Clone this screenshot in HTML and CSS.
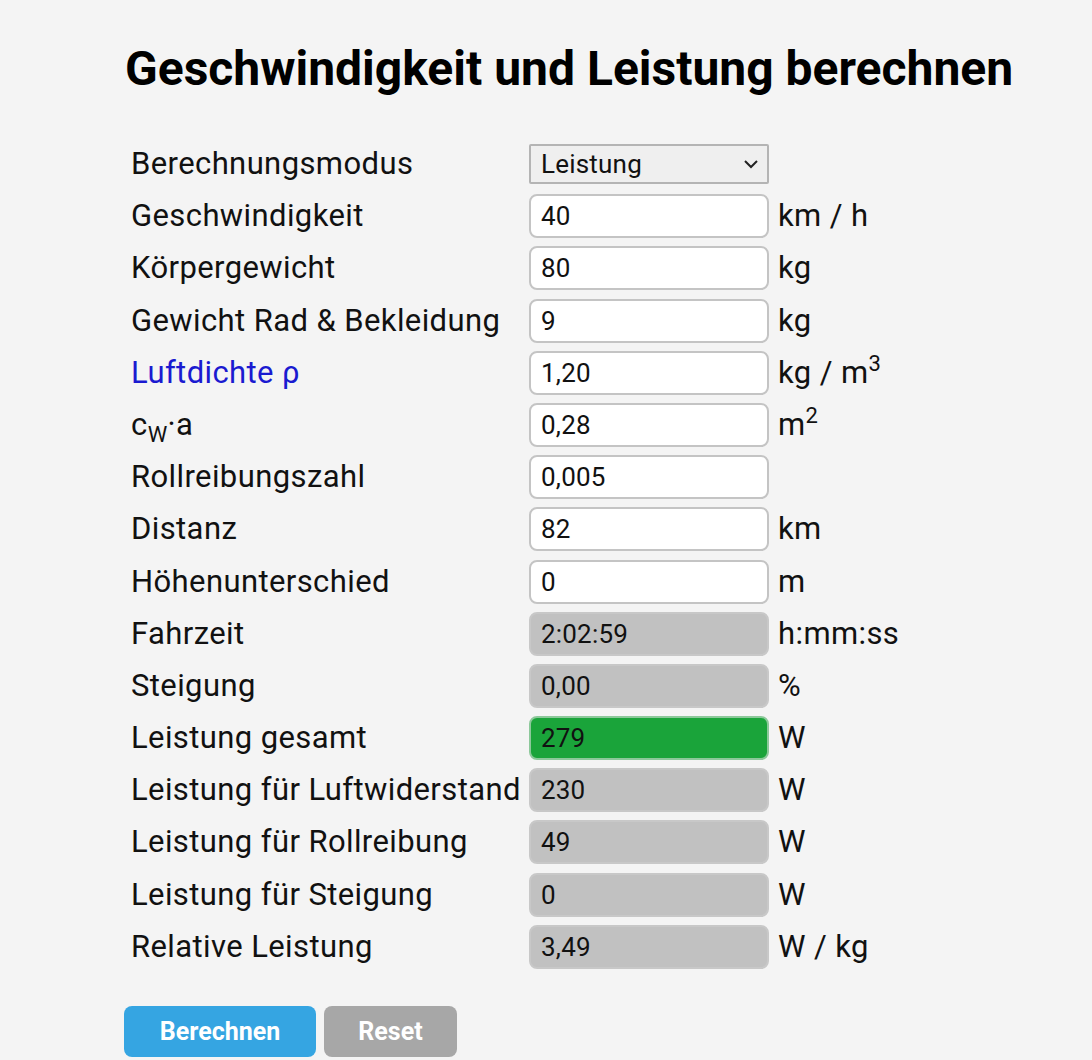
FILE: index.html
```html
<!DOCTYPE html>
<html lang="de">
<head>
<meta charset="utf-8">
<title>Geschwindigkeit und Leistung berechnen</title>
<link rel="stylesheet" href="styles.css">
</head>
<body>
<main class="page">
  <h1 class="title">Geschwindigkeit und Leistung berechnen</h1>
  <div class="form">
    <div class="label">Berechnungsmodus</div>
    <div class="field"><div class="select"><span>Leistung</span><svg class="chev" width="16" height="10" viewBox="0 0 16 10"><path d="M2 2 L8 8 L14 2" fill="none" stroke="#222" stroke-width="2"/></svg></div></div>
    <div class="unit"></div>

    <div class="label">Geschwindigkeit</div>
    <div class="field"><div class="input">40</div></div>
    <div class="unit">km / h</div>

    <div class="label">Körpergewicht</div>
    <div class="field"><div class="input">80</div></div>
    <div class="unit">kg</div>

    <div class="label">Gewicht Rad &amp; Bekleidung</div>
    <div class="field"><div class="input">9</div></div>
    <div class="unit">kg</div>

    <div class="label link">Luftdichte ρ</div>
    <div class="field"><div class="input">1,20</div></div>
    <div class="unit">kg / m<sup>3</sup></div>

    <div class="label">c<sub>W</sub>·a</div>
    <div class="field"><div class="input">0,28</div></div>
    <div class="unit">m<sup>2</sup></div>

    <div class="label">Rollreibungszahl</div>
    <div class="field"><div class="input">0,005</div></div>
    <div class="unit"></div>

    <div class="label">Distanz</div>
    <div class="field"><div class="input">82</div></div>
    <div class="unit">km</div>

    <div class="label">Höhenunterschied</div>
    <div class="field"><div class="input">0</div></div>
    <div class="unit">m</div>

    <div class="label">Fahrzeit</div>
    <div class="field"><div class="input ro">2:02:59</div></div>
    <div class="unit">h:mm:ss</div>

    <div class="label">Steigung</div>
    <div class="field"><div class="input ro">0,00</div></div>
    <div class="unit">%</div>

    <div class="label">Leistung gesamt</div>
    <div class="field"><div class="input ok">279</div></div>
    <div class="unit">W</div>

    <div class="label">Leistung für Luftwiderstand</div>
    <div class="field"><div class="input ro">230</div></div>
    <div class="unit">W</div>

    <div class="label">Leistung für Rollreibung</div>
    <div class="field"><div class="input ro">49</div></div>
    <div class="unit">W</div>

    <div class="label">Leistung für Steigung</div>
    <div class="field"><div class="input ro">0</div></div>
    <div class="unit">W</div>

    <div class="label">Relative Leistung</div>
    <div class="field"><div class="input ro">3,49</div></div>
    <div class="unit">W / kg</div>
  </div>
  <div class="buttons">
    <button class="btn primary">Berechnen</button>
    <button class="btn secondary">Reset</button>
  </div>
</main>
</body>
</html>
```
FILE: styles.css
```css
html, body {
  margin: 0;
  padding: 0;
  background: #f4f4f4;
}
body {
  font-family: Roboto, "Liberation Sans", sans-serif;
  color: #111;
}
.page {
  padding: 36px 0 0 124px;
}
.title {
  margin: 0 0 40px 1px;
  font-size: 48px;
  font-weight: 700;
  line-height: 66px;
  color: #000;
  letter-spacing: 0;
}
.form {
  display: grid;
  grid-template-columns: 398px 249px auto;
  row-gap: 8.2px;
  margin-left: 7px;
}
.label {
  font-size: 31px;
  letter-spacing: 0.4px;
  line-height: 44px;
  height: 44px;
  color: #111;
  white-space: nowrap;
}
.label.link {
  color: #1a1ad0;
}
.label sub {
  font-size: 22px;
  vertical-align: -7px;
  line-height: 0;
}
.field {
  display: flex;
  align-items: center;
}
.select {
  box-sizing: border-box;
  width: 240px;
  height: 40px;
  background: #efefef;
  border: 2px solid #b4b4b4;
  border-radius: 2px;
  display: flex;
  align-items: center;
  justify-content: space-between;
  padding: 0 8px 0 10px;
  font-size: 26px;
  letter-spacing: 0.2px;
  color: #111;
}
.input {
  box-sizing: border-box;
  width: 240px;
  height: 44px;
  background: #fff;
  border: 2px solid #c4c4c4;
  border-radius: 8px;
  padding: 0 10px;
  font-size: 26px;
  letter-spacing: 0.2px;
  line-height: 40px;
  color: #111;
}
.input.ro {
  background: #c1c1c1;
  border-color: #c8c8c8;
}
.input.ok {
  background: #1aa43a;
  border-color: #8cc89a;
}
.unit {
  font-size: 31px;
  letter-spacing: 0.4px;
  line-height: 44px;
  height: 44px;
  color: #111;
  white-space: nowrap;
}
.unit sup {
  font-size: 22px;
  vertical-align: 12px;
  line-height: 0;
}
.buttons {
  display: flex;
  gap: 8px;
  margin-top: 37px;
}
.btn {
  border: none;
  height: 51px;
  border-radius: 8px;
  color: #fff;
  font-family: Roboto, "Liberation Sans", sans-serif;
  font-weight: 700;
  font-size: 25px;
  padding: 0;
}
.btn.primary {
  background: #35a5e2;
  width: 192px;
}
.btn.secondary {
  background: #a7a7a7;
  width: 133px;
}
```
